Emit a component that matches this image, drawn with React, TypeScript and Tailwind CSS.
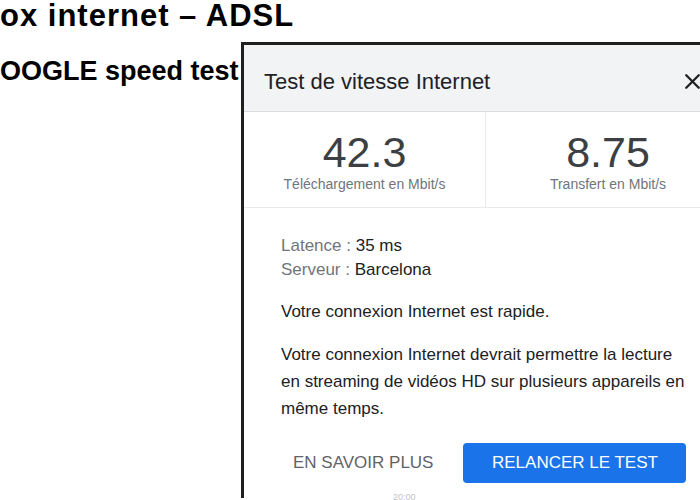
import { X } from "lucide-react";

export default function App() {
  return (
    <div className="relative w-[700px] h-[500px] overflow-hidden bg-white font-['Liberation_Sans',Arial,sans-serif]">
      <h1 className="h-[42px] text-[31px] leading-[32px] font-bold text-black whitespace-nowrap tracking-[1px]">
        ox internet – ADSL
      </h1>

      <div className="flex">
        {/* colonne gauche */}
        <div className="w-[241px] shrink-0 pt-[14px]">
          <h2 className="text-[27px] leading-[30px] font-bold text-black whitespace-nowrap">
            OOGLE speed test
          </h2>
        </div>

        {/* boîte de dialogue */}
        <div className="w-[489px] h-[456px] shrink-0 border-l-[3px] border-t-[3px] border-[#1f1f1f] bg-white">
          <div className="h-[67px] flex items-center justify-between pt-[7px] pl-[20px] pr-[25px] bg-[#f1f3f4] border-b border-[#dadce0]">
            <span className="text-[22px] text-[#202124]">Test de vitesse Internet</span>
            <X size={25} strokeWidth={2.2} className="text-[#202124]" />
          </div>

          <div className="flex h-[96px] border-b border-[#e8eaed]">
            <div className="w-[242px] flex flex-col items-center pt-[18px] border-r border-[#e8eaed]">
              <span className="text-[43px] leading-[44px] text-[#3c4043]">42.3</span>
              <span className="text-[14px] leading-[18px] text-[#70757a] mt-[1px]">Téléchargement en Mbit/s</span>
            </div>
            <div className="flex-1 flex flex-col items-center pt-[18px]">
              <span className="text-[43px] leading-[44px] text-[#3c4043]">8.75</span>
              <span className="text-[14px] leading-[18px] text-[#70757a] mt-[1px]">Transfert en Mbit/s</span>
            </div>
          </div>

          <div className="pl-[37px] pr-[40px] pt-[26px] text-[17px] text-[#202124]">
            <div className="leading-[24px]">
              <span className="text-[#70757a]">Latence : </span>35 ms
            </div>
            <div className="leading-[24px]">
              <span className="text-[#70757a]">Serveur : </span>Barcelona
            </div>
            <p className="mt-[18px] leading-[24px]">Votre connexion Internet est rapide.</p>
            <p className="mt-[17px] leading-[27px] w-[404px]">
              Votre connexion Internet devrait permettre la lecture en streaming de vidéos HD sur plusieurs appareils en même temps.
            </p>

            <div className="flex items-center mt-[21px]">
              <button className="h-[40px] px-3 text-[17px] text-[#5f6368] uppercase">En savoir plus</button>
              <button className="ml-[18px] h-[40px] w-[223px] rounded-[4px] bg-[#1a73e8] text-white text-[17px] uppercase">
                Relancer le test
              </button>
            </div>
            <div className="mt-[9px] pl-[112px] text-[9px] leading-[10px] text-[#c0c4c8]">20:00</div>
          </div>
        </div>
      </div>
    </div>
  );
}
